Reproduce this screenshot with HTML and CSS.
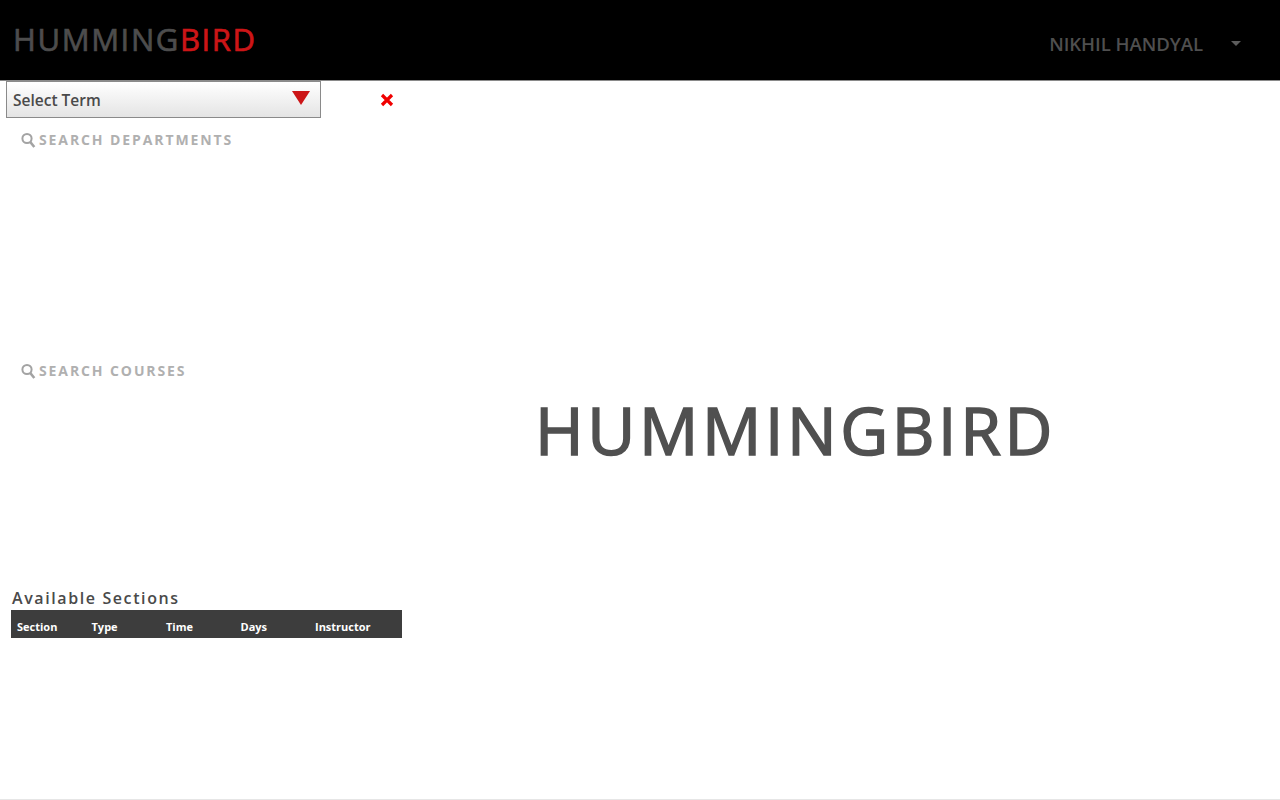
FILE: index.html
```html
<!DOCTYPE html>
<html>
  <head>
    <meta charset="utf-8">
    <title>Hummingbird</title>
    <link rel="stylesheet" href="styles.css">
  </head>
  <body>
    <header class="topbar">
      <div class="brand">HUMMING<span class="brand-red">BIRD</span></div>
      <div class="user">
        <span class="user-name">NIKHIL HANDYAL</span>
        <span class="user-caret"></span>
      </div>
    </header>

    <main class="content">
      <aside class="sidebar">
        <div class="term-row">
          <div class="term-select">
            <span>Select Term</span>
            <span class="term-arrow"></span>
          </div>
          <svg class="term-clear" width="14" height="14" viewBox="0 0 14 14">
            <path d="M2 2 L12 12 M12 2 L2 12" stroke="#f00000" stroke-width="3.2" fill="none"/>
          </svg>
        </div>

        <div class="search search-departments">
          <svg class="search-icon" width="15" height="16" viewBox="0 0 15 16">
            <circle cx="6" cy="6.5" r="4.6" stroke="#a3a3a3" stroke-width="2" fill="none"/>
            <path d="M9.3 10 L13.3 15" stroke="#a3a3a3" stroke-width="2.6"/>
          </svg>
          <span>SEARCH DEPARTMENTS</span>
        </div>

        <div class="search search-courses">
          <svg class="search-icon" width="15" height="16" viewBox="0 0 15 16">
            <circle cx="6" cy="6.5" r="4.6" stroke="#a3a3a3" stroke-width="2" fill="none"/>
            <path d="M9.3 10 L13.3 15" stroke="#a3a3a3" stroke-width="2.6"/>
          </svg>
          <span>SEARCH COURSES</span>
        </div>

        <h2 class="sections-title">Available Sections</h2>
        <div class="sections-head">
          <span>Section</span>
          <span>Type</span>
          <span>Time</span>
          <span>Days</span>
          <span>Instructor</span>
        </div>
      </aside>

      <section class="stage">
        <div class="stage-logo">HUMMINGBIRD</div>
      </section>
    </main>
  </body>
</html>
```

FILE: styles.css
```css
html, body { margin: 0; height: 100%; }
body {
  background: #fff;
  font-family: "Open Sans", "Noto Sans", sans-serif;
  display: flex;
  flex-direction: column;
  height: 800px;
  overflow: hidden;
  box-sizing: border-box;
  border-bottom: 1px solid #e6e6e6;
}

.topbar {
  height: 80px;
  flex: none;
  background: #000;
  border-bottom: 1px solid #8a8a8a;
  display: flex;
  justify-content: space-between;
}
.brand {
  margin: 20px 0 0 13px;
  font-size: 31px;
  line-height: 38px;
  letter-spacing: 1.6px;
  color: #4d4d4d;
  -webkit-text-stroke: 0.7px currentColor;
}
.brand-red { color: #cc1517; }

.user { display: flex; align-items: center; height: 87px; padding-right: 39px; }
.user-name { font-size: 18.6px; font-weight: 600; color: #4f4f4f; letter-spacing: -0.05px; }
.user-caret {
  margin-left: 28px;
  border-left: 5px solid transparent;
  border-right: 5px solid transparent;
  border-top: 5px solid #5c5c5c;
}

.content { flex: 1; display: flex; min-height: 0; }
.sidebar { width: 402px; flex: none; }

.term-row { display: flex; align-items: center; padding-left: 6px; }
.term-select {
  width: 315px;
  height: 37px;
  box-sizing: border-box;
  border: 1px solid #8a8a8a;
  background: linear-gradient(#fff, #e4e4e4);
  display: flex;
  align-items: center;
  justify-content: space-between;
  padding: 0 10px 0 6px;
  font-size: 15.5px;
  font-weight: 600;
  color: #4a4a4a;
}
.term-arrow {
  margin-bottom: 4px;
  border-left: 9.5px solid transparent;
  border-right: 9.5px solid transparent;
  border-top: 14px solid #cc1517;
}
.term-clear { margin-left: 59px; }

.search {
  display: flex;
  align-items: center;
  gap: 3px;
  padding-left: 21px;
  font-size: 14px;
  line-height: 19px;
  font-weight: 700;
  letter-spacing: 1.9px;
  color: #b0b0b0;
}
.search-departments { margin-top: 12px; }
.search-courses { margin-top: 212px; }
.search-icon { flex: none; }

.sections-title {
  margin: 208px 0 0 12px;
  font-size: 16px;
  line-height: 20px;
  font-weight: 600;
  letter-spacing: 1.6px;
  color: #4a4a4a;
}
.sections-head {
  margin: 2px 0 0 11px;
  height: 28px;
  background: #3d3d3d;
  display: grid;
  grid-template-columns: repeat(4, 74.5px) 1fr;
  align-items: center;
  padding: 4px 0 0 6px;
  box-sizing: border-box;
  font-size: 11px;
  font-weight: 700;
  color: #fff;
}

.stage { flex: 1; display: flex; justify-content: center; padding-right: 91px; }
.stage-logo {
  margin-top: 308px;
  font-size: 66px;
  line-height: 80px;
  letter-spacing: 3.6px;
  color: #505050;
  -webkit-text-stroke: 1.6px currentColor;
}
```
